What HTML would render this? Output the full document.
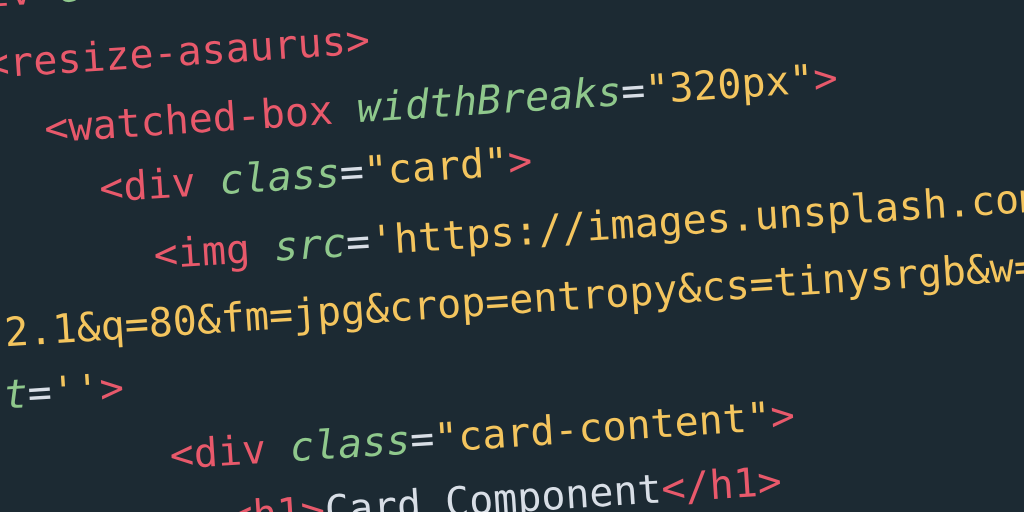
<!DOCTYPE html>
<html><head><meta charset="utf-8"><style>
html,body{margin:0;padding:0;width:1024px;height:512px;overflow:hidden;background:#1c2a33;}
#w{position:relative;width:1024px;height:512px;overflow:hidden;background:#1c2a33;}
#c{position:absolute;left:0;top:0;transform-origin:0 0;transform:rotate(-3.7deg);}
.l{position:absolute;white-space:pre;font-family:"DejaVu Sans Mono","Liberation Mono",monospace;font-size:40px;line-height:40px;color:#d8dee6;}
.t{color:#e8596b}.a{color:#8fc88c;font-style:italic}.s{color:#f4c55e}.p{color:#d8dee6}
</style></head><body><div id="w"><div id="c">
<div class="l" style="left:-63px;top:-27px"><span class="t">&lt;div</span> <span class="a">class</span><span class="p">=</span><span class="s">"page"</span><span class="t">&gt;</span></div>
<div class="l" style="left:-19px;top:44px"><span class="t">&lt;resize-asaurus&gt;</span></div>
<div class="l" style="left:36px;top:112px"><span class="t">&lt;watched-box</span> <span class="a">widthBreaks</span><span class="p">=</span><span class="s">"320px"</span><span class="t">&gt;</span></div>
<div class="l" style="left:87px;top:175px"><span class="t">&lt;div</span> <span class="a">class</span><span class="p">=</span><span class="s">"card"</span><span class="t">&gt;</span></div>
<div class="l" style="left:137px;top:245px"><span class="t">&lt;img</span> <span class="a">src</span><span class="p">=</span><span class="s">'https://images.unsplash.com/photo</span></div>
<div class="l" style="left:-17px;top:313px"><span class="s">2.1&amp;q=80&amp;fm=jpg&amp;crop=entropy&amp;cs=tinysrgb&amp;w=1080</span></div>
<div class="l" style="left:-46px;top:375px"><span class="a">lt</span><span class="p">=</span><span class="s">''</span><span class="t">&gt;</span></div>
<div class="l" style="left:140px;top:446px"><span class="t">&lt;div</span> <span class="a">class</span><span class="p">=</span><span class="s">"card-content"</span><span class="t">&gt;</span></div>
<div class="l" style="left:195px;top:511px"><span class="t">&lt;h1&gt;</span><span class="p">Card Component</span><span class="t">&lt;/h1&gt;</span></div>
</div></div></body></html>
